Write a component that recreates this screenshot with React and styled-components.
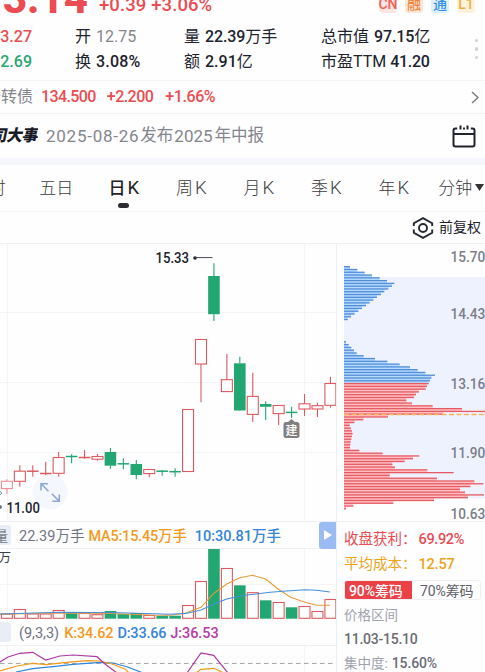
import React from "react";
import styled, { createGlobalStyle, css } from "styled-components";

const RED = "#ea4c52";
const GREEN = "#22a772";
const DARK = "#20222d";
const GRAY = "#84858d";
const ORANGE = "#f39a1d";
const BLUE = "#3585d8";
const FONT = `Roboto, "Noto Sans CJK SC", sans-serif`;

const GlobalStyle = createGlobalStyle`
  * { box-sizing: border-box; }
  body { margin: 0; background: #fefefe; font-family: ${FONT}; overflow: hidden; }
  svg { display: block; }
`;

const Page = styled.main`
  width: 485px;
  height: 672px;
  overflow: hidden;
  display: flex;
  flex-direction: column;
  background: #fefefe;
  color: ${DARK};
  white-space: nowrap;
`;

const Text = styled.span`
  flex: none;
  line-height: 1.2;
  color: ${(p) => p.$color || DARK};
  font-size: ${(p) => p.$size || 16}px;
  font-weight: ${(p) => p.$weight || 400};
  letter-spacing: ${(p) => p.$ls || 0}px;
  margin-left: ${(p) => p.$gap || 0}px;
`;

const QuoteRow = styled.header`
  flex: none;
  height: 23px;
  display: flex;
  overflow: hidden;
`;

const Price = styled.div`
  width: 88px;
  flex: none;
  display: flex;
  justify-content: flex-end;
  margin-top: -26.5px;
  font-size: 42px;
  line-height: 50px;
  font-weight: 800;
  color: ${RED};
`;

const Change = styled.div`
  width: 291px;
  padding-left: 11px;
  margin-top: -6px;
  font-size: 18.5px;
  line-height: 22px;
  font-weight: 500;
  letter-spacing: 0.1px;
  color: ${RED};
`;

const Badges = styled.div`
  display: flex;
  gap: 8px;
  margin-top: -5px;
`;

const Badge = styled.span`
  width: 18px;
  height: 18px;
  border-radius: 3px;
  display: flex;
  align-items: center;
  justify-content: center;
  font-size: 14px;
  line-height: 18px;
  font-weight: 500;
  color: ${(p) => p.$fg};
  background: ${(p) => p.$bg};
`;

const Stats = styled.section`
  flex: none;
  height: 58px;
  display: grid;
  grid-template-columns: 32px 152px 137px 150px 14px;
  grid-template-rows: 25px 25px;
  padding-top: 1px;
  border-bottom: 1px solid #f3f3f6;
`;

const Stat = styled.div`
  display: flex;
  align-items: center;
  padding-left: ${(p) => p.$pad || 0}px;
  ${(p) =>
    p.$clip &&
    css`
      justify-content: flex-end;
      overflow: hidden;
    `}
`;

const More = styled.div`
  grid-column: 5;
  grid-row: 1 / 3;
  display: flex;
  flex-direction: column;
  align-items: flex-start;
  justify-content: center;
  gap: 5px;
  padding-left: 4px;
`;

const Dot = styled.i`
  width: 3.4px;
  height: 3.4px;
  border-radius: 50%;
  background: #d2d2d4;
`;

const BondRow = styled.section`
  flex: none;
  height: 33px;
  display: flex;
  align-items: center;
  border-bottom: 1px solid #f3f3f6;
`;

const EventRow = styled.section`
  flex: none;
  height: 44px;
  display: flex;
  align-items: center;
`;

const ClippedLabel = styled.div`
  flex: none;
  width: ${(p) => p.$w}px;
  display: flex;
  justify-content: flex-end;
  overflow: hidden;
`;

const EventTitle = styled.span`
  font-size: 16px;
  line-height: 24px;
  font-weight: 900;
  letter-spacing: -0.5px;
  transform: skewX(-12deg);
  color: #191b28;
`;

const EndIcon = styled.div`
  margin-left: auto;
  margin-right: ${(p) => p.$right}px;
`;

const Band = styled.div`
  flex: none;
  height: 7px;
  background: #f6f6fd;
`;

const Tabs = styled.nav`
  flex: none;
  height: 47px;
  display: flex;
  margin-left: -45px;
  width: 560px;
  border-bottom: 1px solid #f3f3f6;
`;

const Tab = styled.div`
  flex: none;
  width: 67.5px;
  padding-top: 11px;
  display: flex;
  flex-direction: column;
  align-items: center;
  font-size: 17px;
  line-height: 24px;
  font-weight: ${(p) => (p.$active ? 500 : 300)};
  color: ${(p) => (p.$active ? "#222226" : "#3c3c40")};
`;

const TabLabel = styled.span`
  display: flex;
  align-items: center;
  height: 24px;
  gap: ${(p) => p.$gap}px;
`;

const TabLetter = styled.span`
  font-size: 18.5px;
  font-weight: ${(p) => (p.$active ? 400 : 300)};
`;

const TabMark = styled.i`
  width: 11px;
  height: 5px;
  margin-top: 3px;
  border-radius: 3px;
  background: #2c2c31;
`;

const AdjustRow = styled.section`
  flex: none;
  height: 32px;
  display: flex;
  align-items: center;
  justify-content: flex-end;
  gap: 5px;
  padding-right: 4px;
  border-bottom: 1px solid #f1f1f5;
`;

const Body = styled.div`
  flex: 1;
  display: flex;
`;

const ChartColumn = styled.section`
  width: 337px;
  flex: none;
  border-right: 1px solid #eaf0f3;
`;

const SideColumn = styled.section`
  width: 148px;
  flex: none;
`;

const IndicatorBar = styled.div`
  height: ${(p) => p.$h}px;
  display: flex;
  align-items: center;
  border-top: ${(p) => (p.$top ? "1px solid #ededf3" : "0")};
  border-bottom: 1px solid #f0f0f4;
`;

const IndicatorValues = styled.div`
  display: flex;
  padding-top: 2.5px;
`;

const IndicatorTag = styled.div`
  flex: none;
  width: 11px;
  height: 20px;
  display: flex;
  align-items: center;
  justify-content: flex-end;
  padding-right: 3px;
  overflow: hidden;
  border-radius: 0 3px 3px 0;
  background: #e8edf6;
  color: #767a86;
  font-size: 14px;
`;

const NextButton = styled.div`
  margin-left: auto;
  width: 17px;
  height: 27px;
  border-radius: 3px 0 0 3px;
  background: #9abcf2;
  display: flex;
  align-items: center;
  justify-content: center;
`;

const Summary = styled.div`
  height: 151px;
  border-top: 1px solid #f0f0f4;
  padding-left: 7px;
  display: flex;
  flex-direction: column;
`;

const SummaryRow = styled.div`
  height: ${(p) => p.$h}px;
  padding-top: ${(p) => p.$down || 0}px;
  display: flex;
  align-items: center;
`;

const Toggle = styled.div`
  display: flex;
  width: 137px;
  height: 20px;
  border: 1px solid #f0f0f4;
  border-radius: 3px;
  overflow: hidden;
`;

const ToggleItem = styled.div`
  width: ${(p) => p.$w}px;
  margin: -1px 0 -1px -1px;
  padding-left: ${(p) => (p.$on ? 5 : 9)}px;
  display: flex;
  align-items: center;
  font-size: 14px;
  letter-spacing: -0.1px;
  font-weight: ${(p) => (p.$on ? 500 : 400)};
  color: ${(p) => (p.$on ? "#fff" : "#5e606b")};
  background: ${(p) => (p.$on ? "#eb4248" : "transparent")};
`;

/* [direction, body top, body bottom, high, low, volume top] */
const candles = [
  ["p", 481.3, 488.6, 479.3, 494, 614],
  ["u", 471.2, 481.3, 465.3, 486.7, 609.5],
  ["u", 471.2, 471.2, 465.3, 476.7, 614],
  ["u", 473.5, 473.5, 461.7, 475, 614],
  ["u", 457.5, 473.3, 452, 476.7, 610.5],
  ["d", 456.5, 456.5, 454.3, 463.3, 613],
  ["u", 457.5, 457.5, 450, 458.7, 613.5],
  ["u", 456.5, 459.2, 454, 460.7, 614.7],
  ["d", 452, 465.7, 448, 468.7, 611],
  ["d", 463.8, 463.8, 458.3, 469.3, 614],
  ["d", 464, 475, 460, 479.3, 613],
  ["u", 469.5, 473.6, 469, 477.3, 615.5],
  ["d", 471.2, 471.2, 470, 475.7, 615.7],
  ["d", 471.7, 471.7, 468.3, 476.7, 615.7],
  ["u", 409.5, 471.5, 409.5, 471.5, 605.5],
  ["u", 339.5, 364, 339.5, 402.3, 581.5],
  ["d", 276, 314.2, 263.3, 321, 549],
  ["u", 379.7, 391.6, 354, 391.6, 568.5],
  ["d", 363.3, 410.5, 356.7, 411, 585.3],
  ["u", 396.4, 414.4, 372.7, 422, 592.7],
  ["d", 404, 406.8, 401.3, 420, 600.3],
  ["u", 405.5, 413.6, 405.5, 425, 602.5],
  ["d", 412.4, 412.4, 406.7, 418, 607.3],
  ["u", 403.8, 409, 394, 416, 606.5],
  ["u", 405.7, 409, 402.7, 417, 611.5],
  ["u", 383.5, 405.3, 376.7, 407.7, 599.5],
];
const centerX = (i) => 6.9 + i * 12.94;
const tone = (d) => (d === "d" ? GREEN : d === "p" ? "#ee8f94" : "#dc5a60");

function Candle({ data, i }) {
  const [d, top, bottom, high, low] = data;
  const x = centerX(i);
  const color = tone(d);
  const wicks = (
    <path d={`M${x} ${high}V${top}M${x} ${bottom}V${low}`} stroke={color} strokeWidth="1.1" />
  );
  if (top === bottom)
    return (
      <g stroke={color} fill="none">
        <path d={`M${x - 5.8} ${top}h11.6`} strokeWidth="1.5" />
        <path d={`M${x} ${high}V${low}`} strokeWidth="1.1" />
      </g>
    );
  return (
    <g>
      {wicks}
      {d === "d" ? (
        <rect x={x - 5.8} y={top} width="11.6" height={bottom - top} fill={color} />
      ) : (
        <rect x={x - 5.5} y={top} width="11" height={bottom - top} fill="#fff" stroke={color} strokeWidth="1.1" />
      )}
    </g>
  );
}

function PriceChart() {
  return (
    <svg width="336" height="277" viewBox="0 244 336 277">
      <path d="M0 312.5H336M0 382.5H336M0 452.5H336M7.5 244V521M304.5 244V521" stroke="#f4f4f6" fill="none" />
      <circle cx="50" cy="492" r="17.5" fill="#f4f7fd" />
      {candles.map((c, i) => (
        <Candle key={i} data={c} i={i} />
      ))}
      <g stroke="#8ea8d3" strokeWidth="1.6" fill="none">
        <path d="M41 490.5V483.7H48M41.5 484.2L48.5 491.2M59.3 494.5V501.3H52.3M58.8 500.8L51.8 493.8" />
      </g>
      <circle cx="195" cy="258" r="1.8" fill={DARK} />
      <path d="M195 257.6H212.5" stroke="#4a4b57" />
      <text x="155.5" y="263.4" fontSize="14" fontWeight="500" fill={DARK} textLength="33.5" lengthAdjust="spacingAndGlyphs">15.33</text>
      <path d="M-2 490L2 493L-1 496" stroke="#7c96ba" fill="none" />
      <circle cx="0" cy="507" r="2" fill="#6c7892" />
      <text x="6.5" y="512.6" fontSize="14" fontWeight="500" fill={DARK} textLength="33.3" lengthAdjust="spacingAndGlyphs">11.00</text>
      <path d="M291.5 419L295 422H297Q299.5 422 299.5 424.5V435.5Q299.5 438 297 438H286Q283.5 438 283.5 435.5V424.5Q283.5 422 286 422H288Z" fill="#808080" />
      <text x="291.5" y="434.7" fontSize="12" fontWeight="500" fill="#fff" textAnchor="middle">建</text>
    </svg>
  );
}

function VolumeChart() {
  return (
    <svg width="336" height="70" viewBox="0 549 336 70">
      <path d="M0 584.5H336M7.5 549V619M304.5 549V619" stroke="#f5f5f7" fill="none" />
      {candles.map(([d, , , , , y], i) =>
        d === "d" ? (
          <rect key={i} x={centerX(i) - 5.8} y={y} width="11.6" height={618.7 - y} fill={GREEN} />
        ) : (
          <rect key={i} x={centerX(i) - 5.5} y={y} width="11" height={618.3 - y} fill="#fff" stroke="#dc5a60" strokeWidth="1.1" />
        )
      )}
      <path d="M0 614.3L60 613L110 613.5L150 615L170 615.3L185 613.3L201 607.3L213.7 593.3L226.7 584L240 577.7L252.3 575.3L265.7 579L278.3 589.3L290.7 597.3L303.3 601.7L316.7 605.3H330" fill="none" stroke="#e89a3a" strokeWidth="1.1" />
      <path d="M0 614L60 612.3L120 612.7L170 614.3L187 613.3L201 610L216.7 602.7L226.7 599L245 595.3L270 592.3L286.7 591L305 589.7L316.7 590.3L330 592" fill="none" stroke="#478fda" strokeWidth="1.1" />
      <text x="-1.5" y="562.3" fontSize="12.5" fill="#3c3d46">万</text>
    </svg>
  );
}

function KdjChart() {
  return (
    <svg width="336" height="26" viewBox="0 646 336 26">
      <path d="M7.5 646V672M304.5 646V672" stroke="#f5f5f7" />
      <path d="M0 663.4H336" stroke="#a0a0a4" strokeDasharray="4.5 3.5" />
      <g fill="none" strokeWidth="1.2">
        <path stroke="#2f86dc" d="M16 672L32.7 668.7L53 666.7L73 664.3L100 662.3L113 663L127 666.7L143 673" />
        <path stroke={ORANGE} d="M0 671L17 666L32.7 663.3L46 664.7L67 662.3L87 660.7L100 661L112 664L125 669L129 673M196 673L201 669.3L213.7 668.3L224 673" />
        <path stroke="#b03aa4" d="M0 662L8 657L20 653.3L32.7 652.3L45.7 660L60 656L73 655L97 656.7L105 664L117 673M187 673L201 653L213.7 655.3L228 673" />
      </g>
    </svg>
  );
}

/* Chip histogram bar lengths from the top price downward, zero where no chips. */
const chips = [
  18, 40, 62, 84, 107, 129, 151, 144, 133, 121, 111, 99, 88, 77, 66, 54, 43, 32, 21, 11,
  0, 0, 0, 0, 0, 0, 0,
  6, 14, 22, 30, 38, 59, 93, 130, 167, 198, 221, 244, 273, 262, 258,
  254, 249, 245, 225, 216, 210, 187, 204, 266, 354, 423, 297, 132, 58, 31, 17, 21, 24, 26, 24,
  22, 20, 19, 18, 46, 116, 226, 207, 182, 145, 153, 250, 329, 137, 279, 391, 418, 379, 348,
  363, 420, 372, 270, 148, 28, 6,
].map((v) => v / 3);

function ChipChart() {
  return (
    <svg width="148" height="277" viewBox="337 244 148 277">
      <rect x="344" y="277" width="141" height="221.5" fill="#eef2fe" />
      {chips.map((w, i) => {
        const y = 266.7 + i * 2.783;
        const blue = i < 42;
        const next = Math.min(w, chips[i + 1] || 0);
        return (
          <g key={i}>
            <rect x="344" y={y} width={next} height="2.783" fill={blue ? "#b4dafd" : "#ffc0c3"} />
            <rect x="344" y={y - 0.65} width={w} height="1.3" fill={blue ? "#528cda" : "#e65a63"} />
          </g>
        );
      })}
      <path d="M344 414.4H485" stroke="#f5b35a" strokeWidth="1.5" strokeDasharray="5 2.5" />
      {[["15.70", 262], ["14.43", 319], ["13.16", 388.6], ["11.90", 458], ["10.63", 519.3]].map(([t, y]) => (
        <text key={t} x="450.5" y={y} fontSize="15" fontWeight="500" fill="#7c7e89" textLength="34.8" lengthAdjust="spacingAndGlyphs">{t}</text>
      ))}
    </svg>
  );
}

const CalendarIcon = () => (
  <svg width="24" height="24" viewBox="0 0 24 24" fill="none" stroke="#20222d" strokeWidth="2">
    <path d="M5.2 4.5H3.5Q1.5 4.5 1.5 6.5V20.5Q1.5 22.5 3.5 22.5H20.5Q22.5 22.5 22.5 20.5V6.5Q22.5 4.5 20.5 4.5H18.8M2 10H22M8.5 1.5V5.5M15.5 1.5V5.5M11 4.5H13" />
  </svg>
);

const HexIcon = () => (
  <svg width="22" height="22" viewBox="0 0 22 22" fill="none" stroke="#252634" strokeWidth="1.9">
    <path d="M1.8 9V6.2L11 1.2L20.2 6.2V9M1.8 12.5V15.8L11 20.8L20.2 15.8V12.5" />
    <circle cx="11" cy="11" r="4" />
  </svg>
);

const tabs = [["分", "时"], ["五", "日"], ["日", "K"], ["周", "K"], ["月", "K"], ["季", "K"], ["年", "K"]];

export default function App() {
  return (
    <Page>
      <GlobalStyle />
      <QuoteRow>
        <Price>13.14</Price>
        <Change>+0.39 +3.06%</Change>
        <Badges>
          <Badge $fg="#ed6258" $bg="#fde5e3">CN</Badge>
          <Badge $fg="#ef873d" $bg="#fde9da">融</Badge>
          <Badge $fg="#3591e7" $bg="#dff0fd">通</Badge>
          <Badge $fg="#edae3b" $bg="#fdf2db">L1</Badge>
        </Badges>
      </QuoteRow>

      <Stats>
        <Stat $clip><Text $color={RED} $weight={500}>13.27</Text></Stat>
        <Stat $pad={43}><Text>开</Text><Text $color={GRAY} $gap={5}>12.75</Text></Stat>
        <Stat><Text>量</Text><Text $weight={500} $gap={5} $ls={-0.1}>22.39</Text><Text>万手</Text></Stat>
        <Stat><Text>总市值</Text><Text $weight={500} $gap={5} $ls={-0.1}>97.15</Text><Text>亿</Text></Stat>
        <Stat $clip><Text $color="#2ba673" $weight={500}>12.69</Text></Stat>
        <Stat $pad={43}><Text>换</Text><Text $weight={500} $gap={5} $ls={0.2}>3.08%</Text></Stat>
        <Stat><Text>额</Text><Text $weight={500} $gap={5}>2.91</Text><Text>亿</Text></Stat>
        <Stat><Text>市盈TTM</Text><Text $weight={500} $gap={4} $ls={-0.3}>41.20</Text></Stat>
        <More><Dot /><Dot /><Dot /></More>
      </Stats>

      <BondRow>
        <ClippedLabel $w={33}><Text $color={GRAY}>开转债</Text></ClippedLabel>
        <Text $color={RED} $gap={8} $weight={500} $ls={-0.6}>134.500</Text>
        <Text $color={RED} $gap={11} $weight={500} $ls={-0.55}>+2.200</Text>
        <Text $color={RED} $gap={12} $weight={500} $ls={-0.4}>+1.66%</Text>
        <EndIcon $right={6}>
          <svg width="8" height="13" viewBox="0 0 8 13" fill="none" stroke="#77777d" strokeWidth="1.4">
            <path d="M1 1L7 6.5L1 12" />
          </svg>
        </EndIcon>
      </BondRow>

      <EventRow>
        <ClippedLabel $w={38}><EventTitle>公司大事</EventTitle></ClippedLabel>
        <Text $color={GRAY} $gap={8} $size={17} $ls={0.75}>2025-08-26</Text>
        <Text $color={GRAY} $gap={1} $size={16.5}>发布</Text>
        <Text $color={GRAY} $gap={1} $size={17}>2025</Text>
        <Text $color={GRAY} $gap={2} $size={16.5}>年中报</Text>
        <EndIcon $right={9}><CalendarIcon /></EndIcon>
      </EventRow>

      <Band />

      <Tabs>
        {tabs.map(([a, b]) => (
          <Tab key={a + b} $active={a === "日"}>
            <TabLabel $gap={b === "K" ? 2 : 0}>
              <span>{a}</span>
              {b === "K" ? <TabLetter $active={a === "日"}>K</TabLetter> : <span>{b}</span>}
            </TabLabel>
            {a === "日" && <TabMark />}
          </Tab>
        ))}
        <Tab>
          <TabLabel $gap={3}>
            <span>分钟</span>
            <svg width="9" height="8" viewBox="0 0 9 8"><path d="M0 0H9L4.5 7Z" fill="#333338" /></svg>
          </TabLabel>
        </Tab>
      </Tabs>

      <AdjustRow>
        <HexIcon />
        <Text $size={14}>前复权</Text>
      </AdjustRow>

      <Body>
        <ChartColumn>
          <PriceChart />
          <IndicatorBar $h={28} $top>
            <IndicatorTag>量</IndicatorTag>
            <IndicatorValues>
              <Text $gap={8} $size={14.5} $color="#72747e">22.39万手</Text>
              <Text $gap={4} $size={14.5} $weight={500} $color={ORANGE} $ls={-0.2}>MA5:15.45万手</Text>
              <Text $gap={8} $size={14.5} $weight={500} $color={BLUE}>10:30.81万手</Text>
            </IndicatorValues>
            <NextButton>
              <svg width="8" height="10" viewBox="0 0 8 10"><path d="M0 0L8 5L0 10Z" fill="#fff" /></svg>
            </NextButton>
          </IndicatorBar>
          <VolumeChart />
          <IndicatorBar $h={27}>
            <IndicatorTag />
            <IndicatorValues>
              <Text $gap={8} $size={14.5} $color="#72747e">(9,3,3)</Text>
              <Text $gap={5} $size={14.5} $weight={500} $color={ORANGE} $ls={-0.1}>K:34.62</Text>
              <Text $gap={4} $size={14.5} $weight={500} $color={BLUE} $ls={-0.2}>D:33.66</Text>
              <Text $gap={4} $size={14.5} $weight={500} $color="#b83aa6" $ls={-0.1}>J:36.53</Text>
            </IndicatorValues>
          </IndicatorBar>
          <KdjChart />
        </ChartColumn>

        <SideColumn>
          <ChipChart />
          <Summary>
            <SummaryRow $h={33} $down={2}>
              <Text $size={14.5} $color={RED}>收盘获利：</Text>
              <Text $size={14.5} $color={RED} $weight={500} $gap={2} $ls={-0.35}>69.92%</Text>
            </SummaryRow>
            <SummaryRow $h={19} $down={1}>
              <Text $size={14.5} $color="#eda41c">平均成本：</Text>
              <Text $size={14.5} $color="#eda41c" $weight={500} $gap={2} $ls={-0.2}>12.57</Text>
            </SummaryRow>
            <SummaryRow $h={32}>
              <Toggle>
                <ToggleItem $w={69} $on>90%筹码</ToggleItem>
                <ToggleItem $w={70}>70%筹码</ToggleItem>
              </Toggle>
            </SummaryRow>
            <SummaryRow $h={18}><Text $size={13.5} $color="#a0a2ad">价格区间</Text></SummaryRow>
            <SummaryRow $h={30}><Text $size={14} $weight={500} $color="#6a6c76" $ls={-0.25}>11.03-15.10</Text></SummaryRow>
            <SummaryRow $h={18}>
              <Text $size={13.5} $color="#a0a2ad">集中度:</Text>
              <Text $size={14} $weight={500} $gap={4} $color="#6a6c76" $ls={-0.15}>15.60%</Text>
            </SummaryRow>
          </Summary>
        </SideColumn>
      </Body>
    </Page>
  );
}
